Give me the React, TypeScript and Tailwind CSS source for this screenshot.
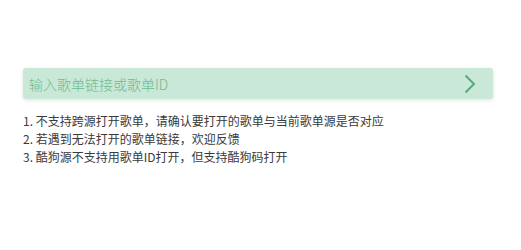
import { useState } from "react";

const tips = [
  "1. 不支持跨源打开歌单，请确认要打开的歌单与当前歌单源是否对应",
  "2. 若遇到无法打开的歌单链接，欢迎反馈",
  "3. 酷狗源不支持用歌单ID打开，但支持酷狗码打开",
];

const App = () => {
  const [value, setValue] = useState("");

  return (
    <div
      className="w-[521px] h-[250px] bg-white px-[23px] pt-[68px]"
      style={{ fontFamily: '"Microsoft YaHei", "Noto Sans CJK SC", sans-serif' }}
    >
      {/* Search input */}
      <div className="flex items-center h-[31px] w-[470px] rounded-[3px] bg-[#c9e8d8] shadow-[0_1px_4px_rgba(0,0,0,0.12)]">
        <input
          autoFocus
          value={value}
          onChange={(e) => setValue(e.target.value)}
          placeholder="输入歌单链接或歌单ID"
          className="flex-1 h-full bg-transparent pl-[6px] text-[14px] font-light text-[#333] outline-none placeholder:text-[#6dbb92] caret-black"
        />
        <button className="flex items-center justify-center w-[46px] h-full text-[#5aa883]">
          <svg width="14" height="20" viewBox="0 0 14 20" fill="none">
            <path d="M2.5 1.5 L11 10 L2.5 18.5" stroke="currentColor" strokeWidth="2" />
          </svg>
        </button>
      </div>

      {/* Tips */}
      <ul className="mt-[13px] text-[12px] leading-[18px] text-[#3a3a3a]">
        {tips.map((t) => (
          <li key={t}>{t}</li>
        ))}
      </ul>
    </div>
  );
};

export default App;
